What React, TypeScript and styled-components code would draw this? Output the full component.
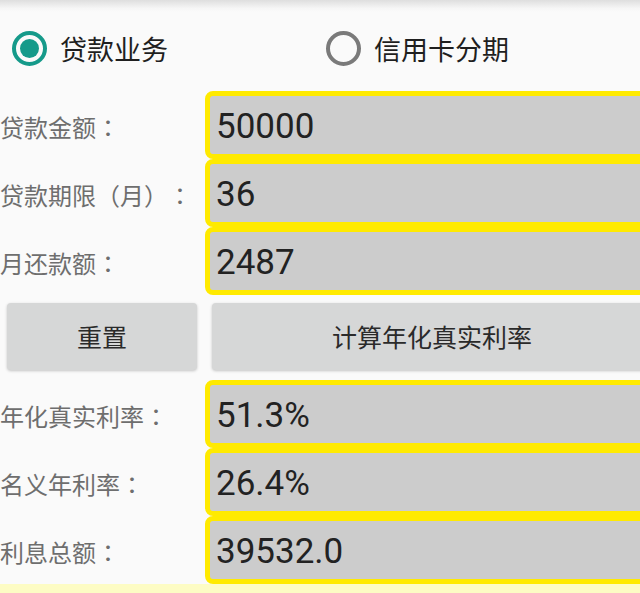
import React, { useState } from "react";
import styled, { createGlobalStyle } from "styled-components";

const Global = createGlobalStyle`
  html, body {
    margin: 0;
    padding: 0;
    background: #fafafa;
    overflow: hidden;
  }
  #root {
    width: 640px;
    height: 593px;
    overflow: hidden;
  }
`;

const Page = styled.div`
  width: 640px;
  height: 593px;
  background: #fafafa;
  display: flex;
  flex-direction: column;
  overflow: hidden;
  font-family: "Noto Sans CJK SC", "Noto Sans", sans-serif;
  text-spacing-trim: space-all;
`;

const TopShadow = styled.div`
  height: 12px;
  flex: none;
  background: linear-gradient(#dedede, #f6f6f6 70%, #fafafa);
`;

const RadioGroup = styled.div`
  height: 79px;
  flex: none;
  display: grid;
  grid-template-columns: 314px 1fr;
  padding-left: 12px;
  align-items: center;
  padding-bottom: 6px;
  box-sizing: border-box;
`;

const RadioItem = styled.label`
  display: flex;
  align-items: center;
  gap: 13px;
  font-size: 27px;
  color: #1f1f1f;
  cursor: pointer;
`;

const RadioCircle = styled.span<{ $checked: boolean }>`
  width: 35px;
  height: 35px;
  box-sizing: border-box;
  border-radius: 50%;
  border: 4px solid ${(p) => (p.$checked ? "#159a8a" : "#7a7a7a")};
  display: flex;
  align-items: center;
  justify-content: center;
  &::after {
    content: "";
    width: 19px;
    height: 19px;
    border-radius: 50%;
    background: #159a8a;
    display: ${(p) => (p.$checked ? "block" : "none")};
  }
`;

const Rows = styled.div`
  display: flex;
  flex-direction: column;
  width: 660px;
  flex: none;
`;

const FieldRow = styled.div`
  display: grid;
  grid-template-columns: 205px 1fr;
  height: 68px;
  align-items: center;
`;

const Label = styled.span`
  font-size: 24px;
  color: #6e6e6e;
  white-space: nowrap;
  padding-top: 3px;
  text-spacing-trim: space-all;
`;

const Colon = styled.span`
  font-family: "Noto Sans CJK TC", "Noto Sans CJK SC", sans-serif;
`;

const ValueBox = styled.div`
  height: 68px;
  box-sizing: border-box;
  border: 5px solid #ffea00;
  border-radius: 8px;
  background: #cccccc;
  display: flex;
  align-items: center;
  padding: 3px 0 0 6px;
  font-family: Roboto, "Noto Sans", sans-serif;
  font-size: 35px;
  color: #222222;
`;

const ButtonRow = styled.div`
  height: 85px;
  box-sizing: border-box;
  padding: 8px 0 10px 7px;
  display: grid;
  grid-template-columns: 190px 440px;
  gap: 15px;
  width: 660px;
  flex: none;
`;

const Button = styled.button`
  border: none;
  border-radius: 4px;
  background: #d6d7d7;
  box-shadow: 0 1px 3px rgba(0, 0, 0, 0.22);
  font-family: "Noto Sans CJK SC", "Noto Sans", sans-serif;
  font-size: 25px;
  font-weight: 400;
  color: #2a2a2a;
  display: flex;
  align-items: center;
  justify-content: center;
  padding: 0 0 2px;
  cursor: pointer;
`;

const BottomStrip = styled.div`
  flex: 1;
  background: #fdfcc4;
`;

const inputs = [
  { label: "贷款金额", value: "50000" },
  { label: "贷款期限（月）", value: "36" },
  { label: "月还款额", value: "2487" },
];

const results = [
  { label: "年化真实利率", value: "51.3%" },
  { label: "名义年利率", value: "26.4%" },
  { label: "利息总额", value: "39532.0" },
];

function Field({ label, value }: { label: string; value: string }) {
  return (
    <FieldRow>
      <Label>
        {label}
        <Colon>：</Colon>
      </Label>
      <ValueBox>{value}</ValueBox>
    </FieldRow>
  );
}

export default function App() {
  const [mode, setMode] = useState<"loan" | "card">("loan");
  return (
    <>
      <Global />
      <Page>
        <TopShadow />
        <RadioGroup>
          <RadioItem onClick={() => setMode("loan")}>
            <RadioCircle $checked={mode === "loan"} />
            贷款业务
          </RadioItem>
          <RadioItem onClick={() => setMode("card")}>
            <RadioCircle $checked={mode === "card"} />
            信用卡分期
          </RadioItem>
        </RadioGroup>
        <Rows>
          {inputs.map((r) => (
            <Field key={r.label} label={r.label} value={r.value} />
          ))}
        </Rows>
        <ButtonRow>
          <Button>重置</Button>
          <Button>计算年化真实利率</Button>
        </ButtonRow>
        <Rows>
          {results.map((r) => (
            <Field key={r.label} label={r.label} value={r.value} />
          ))}
        </Rows>
        <BottomStrip />
      </Page>
    </>
  );
}
